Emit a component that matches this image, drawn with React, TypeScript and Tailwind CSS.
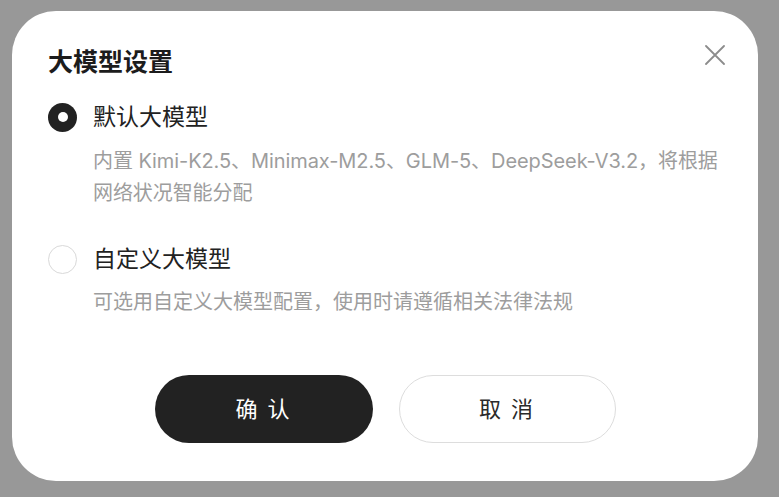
import React, { useState } from "react";

const FONT = "font-['Inter','Noto_Sans_CJK_SC',sans-serif]";

function Radio({ checked }: { checked: boolean }) {
  return checked ? (
    <span className="flex h-[29px] w-[29px] shrink-0 items-center justify-center rounded-full bg-[#222222]">
      <span className="h-[10px] w-[10px] rounded-full bg-white" />
    </span>
  ) : (
    <span className="h-[29px] w-[29px] shrink-0 rounded-full border-[1.5px] border-[#d9d9d9] bg-white" />
  );
}

export default function App() {
  const [sel, setSel] = useState(0);
  return (
    <div className={`w-[779px] h-[497px] bg-[#989898] pt-[11px] pl-[12px] ${FONT}`}>
      <div className="relative w-[746px] h-[470px] rounded-[44px] bg-white px-[36px] pt-[35px]">
        <button className="absolute right-[33px] top-[34px] h-[20px] w-[20px] text-[#8c8c8c]">
          <svg viewBox="0 0 20 20" width="20" height="20" fill="none" stroke="currentColor" strokeWidth="1.8" strokeLinecap="round">
            <path d="M1 1L19 19M19 1L1 19" />
          </svg>
        </button>
        <h1 className="text-[25px] leading-[32px] font-bold text-[#1c1c1c]">大模型设置</h1>

        <div className="mt-[24px] cursor-pointer" onClick={() => setSel(0)}>
          <div className="flex items-center gap-[16px]">
            <Radio checked={sel === 0} />
            <span className="text-[23px] leading-[30px] text-[#222222]">默认大模型</span>
          </div>
          <p className="mt-[13px] pl-[45px] text-[20px] leading-[32px] tracking-[-0.08px] text-[#9d9d9d]">
            内置 Kimi-K2.5、Minimax-M2.5、GLM-5、DeepSeek-V3.2，将根据
            <br />
            网络状况智能分配
          </p>
        </div>

        <div className="mt-[35px] cursor-pointer" onClick={() => setSel(1)}>
          <div className="flex items-center gap-[16px]">
            <Radio checked={sel === 1} />
            <span className="text-[23px] leading-[30px] text-[#222222]">自定义大模型</span>
          </div>
          <p className="mt-[12px] pl-[45px] text-[20px] leading-[32px] text-[#9d9d9d]">
            可选用自定义大模型配置，使用时请遵循相关法律法规
          </p>
        </div>

        <div className="mt-[57px] flex justify-center gap-[26px]">
          <button className="h-[68px] w-[218px] rounded-full bg-[#222222] text-[22px] text-white tracking-[2px]">
            确 认
          </button>
          <button className="h-[68px] w-[217px] rounded-full border-[1.5px] border-[#dddddd] bg-white text-[22px] text-[#2a2a2a] tracking-[2px]">
            取 消
          </button>
        </div>
      </div>
    </div>
  );
}
